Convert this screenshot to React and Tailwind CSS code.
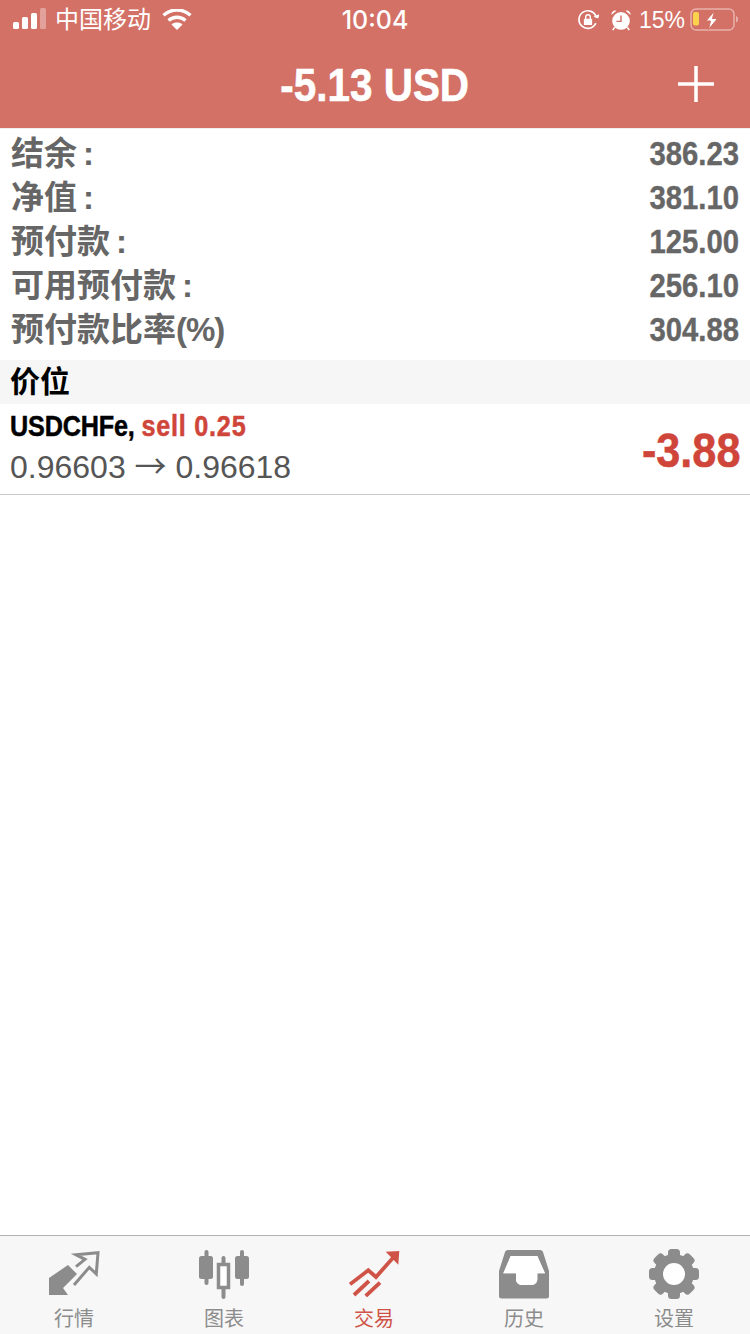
const cjk = { fontFamily: '"Liberation Sans","Noto Sans CJK SC",sans-serif' };

function Signal() {
  return (
    <svg width="34" height="24" viewBox="0 0 34 24">
      <rect x="0" y="14" width="6" height="7" rx="1.500" fill="#fff" />
      <rect x="9" y="9" width="6" height="12" rx="1.500" fill="#fff" />
      <rect x="18" y="5" width="6" height="16" rx="1.500" fill="#fff" />
      <rect x="27" y="0" width="6" height="21" rx="1.500" fill="#fff" fillOpacity="0.35" />
    </svg>
  );
}
function Wifi() {
  return (
    <svg width="30" height="22" viewBox="0 0 30 22">
      <path d="M15 21l-5.500-5.500c3-2.600 8-2.600 11 0z" fill="#fff" />
      <path d="M6.500 11.500c5-4.300 12-4.300 17 0M1.500 6.200c8-7 19-7 27 0" stroke="#fff" strokeWidth="3.400" fill="none" />
    </svg>
  );
}
function RotationLock() {
  return (
    <svg width="22" height="22" viewBox="0 0 24 24">
      <path d="M20.500 15.500A9.600 9.600 0 1 1 21 9" stroke="#fff" strokeWidth="1.800" fill="none" />
      <path d="M18 9l5.500 1 .5-5z" fill="#fff" transform="rotate(8 21 8)" />
      <rect x="7.500" y="10.500" width="9" height="7" rx="1" fill="#fff" />
      <path d="M9.500 11V8.800a2.500 2.500 0 0 1 5 0V11" stroke="#fff" strokeWidth="1.500" fill="none" />
    </svg>
  );
}
function Alarm() {
  return (
    <svg width="22" height="22" viewBox="0 0 24 24">
      <circle cx="12" cy="13" r="9.600" fill="#fff" />
      <path d="M12 7v6.500H7" stroke="#d37166" strokeWidth="1.600" fill="none" />
      <path d="M1.500 6.500C1.500 3 4.500 1 7 2zM22.500 6.500C22.500 3 19.500 1 17 2z" fill="#fff" />
      <path d="M5 20l-2 3M19 20l2 3" stroke="#fff" strokeWidth="1.800" />
    </svg>
  );
}
function Battery() {
  return (
    <svg width="49" height="24" viewBox="0 0 49 24">
      <rect x="1" y="1" width="43" height="21" rx="5" fill="none" stroke="#fff" strokeOpacity="0.45" strokeWidth="1.500" />
      <path d="M46 8c1.500.5 2 1.800 2 3.300s-.5 2.800-2 3.300z" fill="#fff" fillOpacity="0.45" />
      <rect x="3" y="4" width="6" height="13.500" rx="2" fill="#fbd24c" />
      <path d="M24.500 3 L16 13 h4.500 L18.500 21.500 L27.500 10.500 h-5z" fill="#fff" stroke="#d37166" strokeWidth="1" />
    </svg>
  );
}

function IconQuotes() {
  return (
    <svg width="52" height="46" viewBox="0 0 52 46">
      <path d="M1 27L20 14l9 9-14 14 5 7H1z" fill="#8c8c8c" />
      <path d="M28 15.700L37 8.300 28 3.700 50 1.700 48.300 23 41.300 16.300 26 34" fill="none" stroke="#8c8c8c" strokeWidth="3" />
    </svg>
  );
}
function IconChart() {
  return (
    <svg width="50" height="49" viewBox="0 0 50 49" fill="#8c8c8c">
      <rect x="5.500" y="0" width="4" height="35" rx="2" />
      <rect x="0" y="6" width="14" height="23" rx="2.500" />
      <rect x="41" y="0" width="4" height="36" rx="2" />
      <rect x="36" y="6" width="14" height="23" rx="2.500" />
      <rect x="22.500" y="6" width="4" height="43" rx="2" />
      <rect x="19.500" y="14.500" width="10" height="23" fill="#fff" stroke="#8c8c8c" strokeWidth="3.500" />
    </svg>
  );
}
function IconTrade() {
  return (
    <svg width="51" height="46" viewBox="0 0 51 46" fill="none" stroke="#cf5447" strokeWidth="3.800">
      <path d="M1 33.300L19.300 19.300 27 26 46.500 4" />
      <path d="M36.700 .7L50.300 0 49.300 13.700z" fill="#cf5447" stroke="none" />
      <path d="M5 44L20 30M16.700 45L31 31.700" />
    </svg>
  );
}
function IconHistory() {
  return (
    <svg width="50" height="49" viewBox="0 0 50 49">
      <path fillRule="evenodd" fill="#8c8c8c" d="M9 0H41c1.500 0 2.500 .7 3 2L50 21V46a2.500 2.500 0 0 1-2.500 2.500H2.500A2.500 2.500 0 0 1 0 46V21L6 2C6.500 .7 7.500 0 9 0zM11.700 6L4.300 23.300H17V29.300C17 32.500 19.500 35 22.700 35H32.700C35.800 35 38.300 32.500 38.300 29.300V23.300H46L38.300 6z" />
      <path fill="#ffffff" d="M11.700 6L4.300 23.300H17V29.300C17 32.500 19.500 35 22.700 35H32.700C35.800 35 38.300 32.500 38.300 29.300V23.300H46L38.300 6z" />
    </svg>
  );
}
function IconGear() {
  const angles = [0, 45, 90, 135, 180, 225, 270, 315];
  return (
    <svg width="50" height="50" viewBox="0 0 50 50">
      <circle cx="25" cy="25" r="20" fill="#8c8c8c" />
      {angles.map((a) => (
        <rect key={a} x="19" y="0" width="12" height="12" rx="3.500" fill="#8c8c8c" transform={`rotate(${a} 25 25)`} />
      ))}
      <circle cx="25" cy="25" r="11" fill="#ffffff" />
    </svg>
  );
}

const rows = [
  ['结余', ':', '386.23'],
  ['净值', ':', '381.10'],
  ['预付款', ':', '125.00'],
  ['可用预付款', ':', '256.10'],
  ['预付款比率', '(%)', '304.88'],
];
const tabs = [
  ['行情', IconQuotes, false],
  ['图表', IconChart, false],
  ['交易', IconTrade, true],
  ['历史', IconHistory, false],
  ['设置', IconGear, false],
];

export default function App() {
  return (
    <div className="w-[750px] h-[1334px] flex flex-col bg-white overflow-hidden" style={cjk}>
      <div className="bg-[#d37166] h-[128px] shrink-0 flex flex-col text-white">
        <div className="h-[40px] relative flex items-center justify-between pl-[13px] pr-[11px]">
          <div className="flex items-center">
            <Signal />
            <span className="text-[24px] leading-none ml-[8px]">中国移动</span>
            <span className="ml-[11px]"><Wifi /></span>
          </div>
          <span className="absolute left-0 right-0 text-center text-[25px] leading-none font-medium font-['Inter']">10:04</span>
          <div className="flex items-center">
            <RotationLock />
            <span className="w-[11px]" />
            <Alarm />
            <span className="text-[23px] leading-none ml-[7px] mr-[5px]">15%</span>
            <Battery />
          </div>
        </div>
        <div className="h-[88px] relative flex items-center justify-center">
          <span className="text-[47px] leading-none font-bold scale-x-[0.86] [-webkit-text-stroke:0.6px_#fff]">-5.13 USD</span>
          <svg className="absolute left-[677px] top-[25px]" width="38" height="38" viewBox="0 0 38 38">
            <path d="M19 1v36M1 19h36" stroke="#fff" strokeWidth="3.500" />
          </svg>
        </div>
      </div>

      <div className="pt-[2px] pb-[9px] border-t border-[#eeeeee]">
        {rows.map(([k, s, v]) => (
          <div key={k} className="h-[44px] flex items-center justify-between pl-[11px] pr-[11px] text-[#666666] font-bold">
            <span className="text-[33px] leading-none">
              {k}
              {s === ':' ? <span className="ml-[6px]">:</span> : <span className="tracking-[-1px]">{s}</span>}
            </span>
            <span className="text-[34px] leading-none scale-x-[0.86] origin-right [-webkit-text-stroke:0.4px_#666666]">{v}</span>
          </div>
        ))}
      </div>

      <div className="h-[44px] bg-[#f6f6f6] flex items-center pl-[10px] text-[30px] leading-none font-bold text-black">价位</div>

      <div className="h-[91px] border-b border-[#c8c8c8] flex items-center justify-between pl-[10px] pr-[10px]">
        <div className="flex flex-col gap-[8px] pb-[4px]">
          <div className="text-[30px] leading-[30px] font-bold origin-left scale-x-[0.84] whitespace-nowrap">
            <span className="text-black tracking-[-0.2px] [-webkit-text-stroke:0.5px_#000]">USDCHFe, </span>
            <span className="text-[#d0453a] tracking-[0.9px] [-webkit-text-stroke:0.5px_#d0453a]">sell 0.25</span>
          </div>
          <div className="text-[32px] leading-[31px] text-[#555555] whitespace-nowrap">
            0.96603 <span className="font-['Noto_Sans_CJK_SC']">→</span> 0.96618
          </div>
        </div>
        <span className="text-[48px] leading-none font-bold text-[#d0453a] scale-x-[0.9] origin-right pt-[4px] [-webkit-text-stroke:0.5px_#d0453a]">-3.88</span>
      </div>

      <div className="flex-1" />

      <div className="h-[99px] shrink-0 bg-[#f7f7f7] border-t border-[#b2b2b2] grid grid-cols-5">
        {tabs.map(([label, Icon, active]) => (
          <div key={label} className="flex flex-col items-center pr-[2px]">
            <div className="h-[76px] flex items-center"><Icon /></div>
            <span className={`text-[20px] leading-none -mt-[3px] ${active ? 'text-[#cf5447]' : 'text-[#8c8c8c]'}`}>{label}</span>
          </div>
        ))}
      </div>
    </div>
  );
}
